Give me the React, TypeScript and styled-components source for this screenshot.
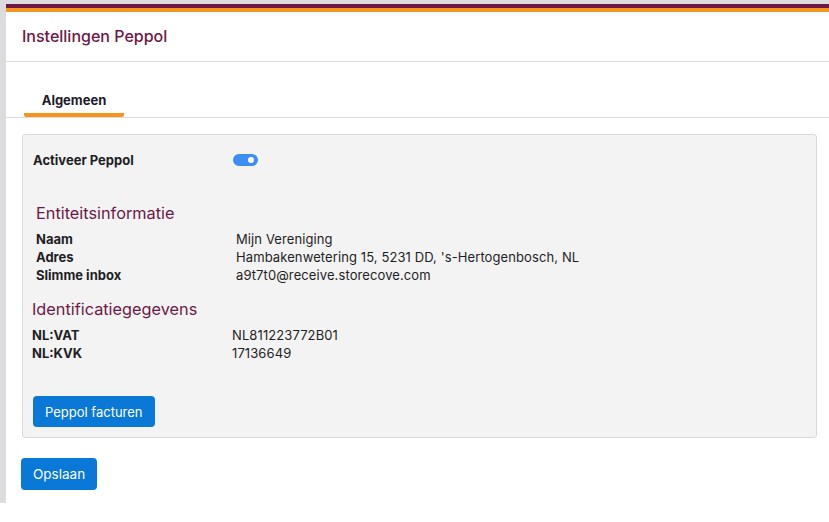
import React from "react";
import styled, { createGlobalStyle } from "styled-components";

const purple = "#6d1846";
const orange = "#f7941d";
const blue = "#0a78d6";

const GlobalStyle = createGlobalStyle`
  html, body {
    margin: 0;
    padding: 0;
    background: #ffffff;
    font-family: Inter, "Noto Sans", sans-serif;
    color: #1e1e24;
  }
`;

const Frame = styled.div`
  background: #dcdcde;
  padding: 4px 0 0 6px;
`;

const Card = styled.main`
  background: #ffffff;
  border-top: 4px solid ${purple};
  height: 499px;
  box-sizing: border-box;

  &::before {
    content: "";
    display: block;
    height: 4px;
    background: ${orange};
  }
`;

const Header = styled.header`
  height: 49px;
  display: flex;
  align-items: center;
  padding-left: 16px;
  border-bottom: 1px solid #dcdcdc;
`;

const Title = styled.h1`
  margin: 0;
  font-size: 16px;
  font-weight: 500;
  color: ${purple};
  padding-bottom: 1px;
`;

const TabBar = styled.nav`
  display: flex;
  padding: 24px 0 0 18px;
  border-bottom: 1px solid #dcdcdc;
`;

const Tab = styled.div<{ $active?: boolean }>`
  width: 100px;
  text-align: center;
  font-size: 13px;
  font-weight: 700;
  color: #1d1a2b;
  line-height: 16px;
  padding: 6px 0 5px;
  border-bottom: 4px solid ${({ $active }) => ($active ? orange : "transparent")};
  border-radius: 0 0 2px 2px;
`;

const Content = styled.div`
  padding: 16px 12px 0 16px;
`;

const Panel = styled.section`
  background: #f3f3f3;
  border: 1px solid #d9d9d9;
  border-radius: 3px;
  padding: 16px 0 10px;
`;

const ToggleRow = styled.div`
  display: grid;
  grid-template-columns: 200px auto;
  align-items: center;
  padding-left: 10px;
  font-size: 13px;
  font-weight: 700;
  line-height: 18px;
`;

const Toggle = styled.span<{ $on?: boolean }>`
  position: relative;
  width: 25px;
  height: 12px;
  border-radius: 6px;
  background: ${({ $on }) => ($on ? "#3a8ef5" : "#bbb")};

  &::after {
    content: "";
    position: absolute;
    top: 3px;
    right: ${({ $on }) => ($on ? "4px" : "auto")};
    left: ${({ $on }) => ($on ? "auto" : "4px")};
    width: 6px;
    height: 6px;
    border-radius: 50%;
    background: #fff;
  }
`;

const Section = styled.div<{ $indent: number; $top: number }>`
  padding-left: ${({ $indent }) => $indent}px;
  margin-top: ${({ $top }) => $top}px;
`;

const SectionTitle = styled.h2`
  margin: 0 0 6px;
  font-size: 16.3px;
  font-weight: 400;
  color: ${purple};
  line-height: 22px;
`;

const InfoGrid = styled.dl`
  display: grid;
  grid-template-columns: 200px auto;
  margin: 0;
  font-size: 13px;
  line-height: 18px;
`;

const Label = styled.dt`
  font-weight: 700;
`;

const Value = styled.dd`
  margin: 0;
  letter-spacing: 0.1px;
`;

const Button = styled.button<{ $size?: "sm" | "md" }>`
  font-family: Inter, "Noto Sans", sans-serif;
  background: ${blue};
  color: #fff;
  border: none;
  border-radius: 4px;
  font-size: ${({ $size }) => ($size === "md" ? "13.5px" : "13px")};
  height: ${({ $size }) => ($size === "md" ? "32px" : "31px")};
  padding: 0 12px;
  cursor: pointer;
`;

const PanelActions = styled.div`
  padding: 34px 0 0 10px;
`;

const Footer = styled.div`
  padding: 20px 0 0 15px;
`;

export default function App() {
  return (
    <>
      <GlobalStyle />
      <Frame>
        <Card>
          <Header>
            <Title>Instellingen Peppol</Title>
          </Header>
          <TabBar>
            <Tab $active>Algemeen</Tab>
          </TabBar>
          <Content>
            <Panel>
              <ToggleRow>
                <span>Activeer Peppol</span>
                <Toggle $on />
              </ToggleRow>
              <Section $indent={13} $top={33}>
                <SectionTitle>Entiteitsinformatie</SectionTitle>
                <InfoGrid>
                  <Label>Naam</Label>
                  <Value>Mijn Vereniging</Value>
                  <Label>Adres</Label>
                  <Value>Hambakenwetering 15, 5231 DD, 's-Hertogenbosch, NL</Value>
                  <Label>Slimme inbox</Label>
                  <Value>a9t7t0@receive.storecove.com</Value>
                </InfoGrid>
              </Section>
              <Section $indent={9} $top={14}>
                <SectionTitle>Identificatiegegevens</SectionTitle>
                <InfoGrid>
                  <Label>NL:VAT</Label>
                  <Value>NL811223772B01</Value>
                  <Label>NL:KVK</Label>
                  <Value>17136649</Value>
                </InfoGrid>
              </Section>
              <PanelActions>
                <Button>Peppol facturen</Button>
              </PanelActions>
            </Panel>
          </Content>
          <Footer>
            <Button $size="md">Opslaan</Button>
          </Footer>
        </Card>
      </Frame>
    </>
  );
}
